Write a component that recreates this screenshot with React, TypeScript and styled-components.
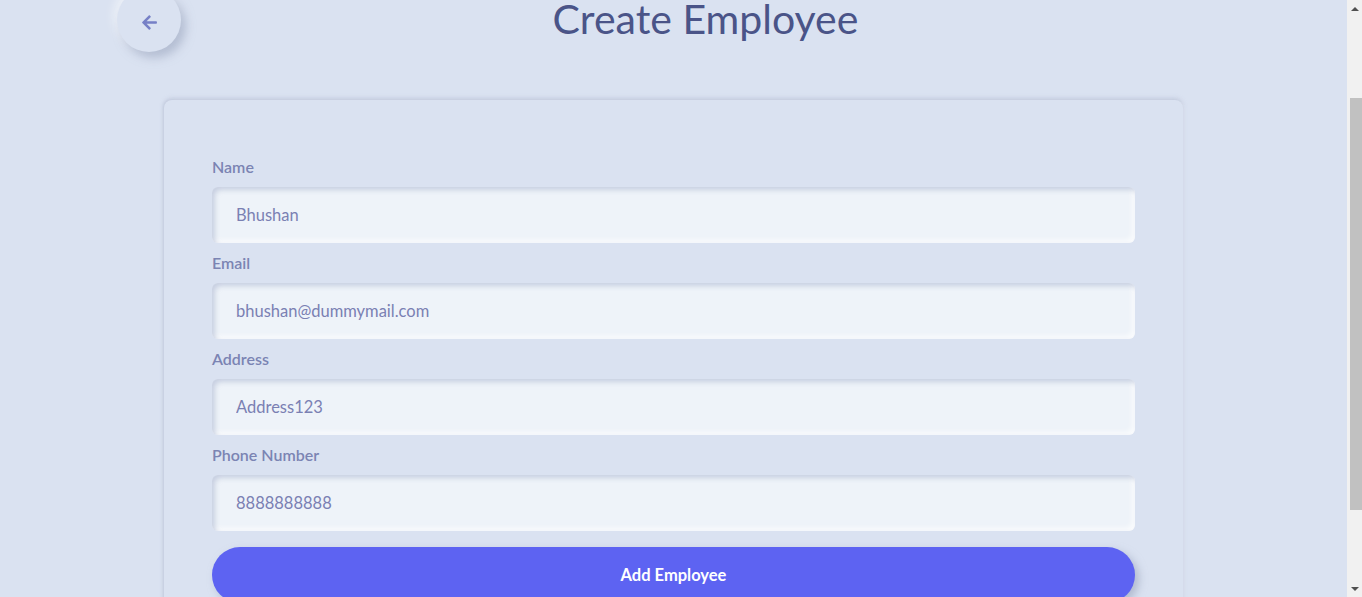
import React, { useLayoutEffect } from 'react';
import styled, { createGlobalStyle } from 'styled-components';
import { FaArrowLeft } from 'react-icons/fa';

const GlobalStyle = createGlobalStyle`
  html, body {
    margin: 0;
    padding: 0;
    background: #dae2f1;
    font-family: Lato, "Noto Sans", sans-serif;
  }
  * {
    box-sizing: border-box;
  }
`;

const Page = styled.div`
  min-height: 816px;
  padding: 105px 15px 48px 0;
`;

// the headless browser hides its scrollbar, so draw the one the screenshot has
const ScrollTrack = styled.div`
  position: fixed;
  top: 0;
  right: 0;
  width: 15px;
  height: 100vh;
  background: #f1f1f1;
  display: flex;
  flex-direction: column;
  align-items: flex-end;
`;

const ScrollArrow = styled.div<{ $down?: boolean }>`
  width: 15px;
  height: 17px;
  flex: none;
  display: grid;
  place-items: center;

  &::after {
    content: '';
    border-left: 4px solid transparent;
    border-right: 4px solid transparent;
    ${(p) =>
      p.$down
        ? 'border-top: 4px solid #505050;'
        : 'border-bottom: 4px solid #505050;'}
  }
`;

const ScrollThumb = styled.div`
  width: 12px;
  height: 412px;
  margin-top: 81px;
  background: #c1c1c1;
`;

const ScrollRest = styled.div`
  flex: 1;
`;

const Container = styled.div`
  width: 1113px;
  margin: 0 auto;
`;

const Header = styled.header`
  display: flex;
  align-items: center;
  height: 64px;
`;

const BackButton = styled.button`
  width: 64px;
  height: 64px;
  border-radius: 50%;
  border: none;
  background: #dae2f1;
  color: #7680c6;
  display: grid;
  place-items: center;
  padding: 5px 0 0;
  font-size: 17px;
  cursor: pointer;
  box-shadow: 5px 6px 10px rgba(150, 160, 185, 0.55),
    -4px -4px 10px rgba(255, 255, 255, 0.5);
`;

const Title = styled.h1`
  flex: 1;
  margin: -4px 0 0;
  text-align: center;
  font-weight: 400;
  font-size: 41px;
  line-height: 1;
  color: #4a5488;
`;

const Card = styled.section`
  width: 1019px;
  margin: 48px auto 0;
  padding: 55px 48px 48px;
  border-radius: 8px;
  background: #dae2f1;
  box-shadow: 0 -2px 4px rgba(160, 170, 195, 0.35),
    -1px 0 3px rgba(160, 170, 195, 0.3), 1px 0 3px rgba(255, 255, 255, 0.3);
`;

const Form = styled.form`
  display: flex;
  flex-direction: column;
  gap: 8px;
`;

const Label = styled.label`
  font-size: 16px;
  line-height: 24px;
  font-weight: 600;
  color: #7b84b3;
`;

const Input = styled.input`
  height: 56px;
  border: none;
  border-radius: 6px;
  padding: 0 24px;
  font-family: inherit;
  font-size: 16.5px;
  color: #7a80b3;
  background: #eef3f9;
  outline: none;
  box-shadow: inset 3px 3px 5px rgba(175, 185, 210, 0.6),
    inset -3px -3px 5px rgba(255, 255, 255, 0.7);
`;

const SubmitButton = styled.button`
  margin-top: 8px;
  height: 56px;
  border: none;
  border-radius: 28px;
  background: #5d63f2;
  color: #ffffff;
  font-family: inherit;
  font-size: 16.5px;
  font-weight: 700;
  cursor: pointer;
  box-shadow: 4px 4px 8px rgba(150, 160, 185, 0.6);
`;

const fields = [
  { label: 'Name', value: 'Bhushan' },
  { label: 'Email', value: 'bhushan@dummymail.com' },
  { label: 'Address', value: 'Address123' },
  { label: 'Phone Number', value: '8888888888' },
];

const App = (): JSX.Element => {
  // page is shown scrolled a little, like the screenshot
  useLayoutEffect(() => {
    window.scrollTo(0, 117);
  }, []);

  return (
    <Page>
      <GlobalStyle />
      <Container>
        <Header>
          <BackButton aria-label='back'>
            <FaArrowLeft />
          </BackButton>
          <Title>Create Employee</Title>
        </Header>
        <Card>
          <Form onSubmit={(e) => e.preventDefault()}>
            {fields.map((f) => (
              <React.Fragment key={f.label}>
                <Label>{f.label}</Label>
                <Input defaultValue={f.value} />
              </React.Fragment>
            ))}
            <SubmitButton type='submit'>Add Employee</SubmitButton>
          </Form>
        </Card>
      </Container>
      <ScrollTrack aria-hidden>
        <ScrollArrow />
        <ScrollThumb />
        <ScrollRest />
        <ScrollArrow $down />
      </ScrollTrack>
    </Page>
  );
};

export default App;
